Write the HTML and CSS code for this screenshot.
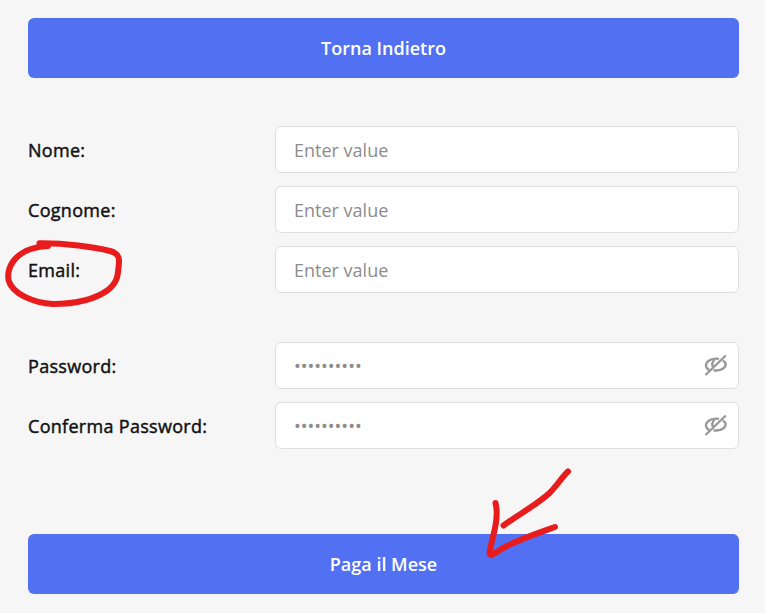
FILE: index.html
```html
<!DOCTYPE html>
<html lang="it">
<head>
	<meta charset="utf-8">
	<title>Paga il Mese</title>
	<link rel="stylesheet" href="styles.css">
</head>
<body>
	<div class="container">
		<button type="button" class="btn">Torna Indietro</button>
		<form class="form" id="payment-form">
			<div class="form-group">
				<div class="form-row">
					<label for="nome">Nome:</label>
					<input type="text" id="nome" name="nome" placeholder="Enter value">
				</div>
				<div class="form-row">
					<label for="cognome">Cognome:</label>
					<input type="text" id="cognome" name="cognome" placeholder="Enter value">
				</div>
				<div class="form-row">
					<label for="email">Email:</label>
					<input type="text" id="email" name="email" placeholder="Enter value">
				</div>
			</div>
			<div class="form-group">
				<div class="form-row">
					<label for="password">Password:</label>
					<div class="password-field">
						<input type="password" id="password" name="password" placeholder="••••••••••">
						<svg class="eye" viewBox="0 0 24 24">
							<path d="M5 16C1.200 13.500 .8 10 4 7.300C7 4.900 11 4.300 15 4.900M8.800 12.500C7.700 10 8.700 7.300 11 5M18.800 6.500C22.500 8.500 22.500 12 19.500 14.300C17 16.300 13 16.800 9.500 16.200M1.500 21L21.800 1.500"/>
						</svg>
					</div>
				</div>
				<div class="form-row">
					<label for="confirm-password">Conferma Password:</label>
					<div class="password-field">
						<input type="password" id="confirm-password" name="confirm-password" placeholder="••••••••••">
						<svg class="eye" viewBox="0 0 24 24">
							<path d="M5 16C1.200 13.500 .8 10 4 7.300C7 4.900 11 4.300 15 4.900M8.800 12.500C7.700 10 8.700 7.300 11 5M18.800 6.500C22.500 8.500 22.500 12 19.500 14.300C17 16.300 13 16.800 9.500 16.200M1.500 21L21.800 1.500"/>
						</svg>
					</div>
				</div>
			</div>
			<button type="submit" class="btn btn-submit">Paga il Mese</button>
		</form>
	</div>

	<!-- hand-drawn marks over the email label and the pay button -->
	<svg class="marks" width="765" height="613" viewBox="0 0 765 613">
		<path d="M39.500 243.300C65 243 94 247 110 251C117 253 119.500 256 119 262C118 275 118 282 108 290C94 300 77 304 53 304C34 303 12 294 8.500 280C6.500 266 16 254 31 249Q40 246 48 246"/>
		<path d="M568 471.500C562 477 556 487 549 493.500C535 506 519 514 503.500 525.500"/>
		<path d="M495.500 503C499 517 494 532 491 545C490 551 488.500 554 491 555C493 555 499 550 505 547C520 539 538 533 555 527"/>
	</svg>
</body>
</html>
```
FILE: styles.css
```css
* {
	box-sizing: border-box;
}

body {
	margin: 0;
	background-color: #f6f6f6;
	color: #111;
	font-family: "Open Sans", sans-serif;
	font-size: 18px;
}

.container {
	padding: 18px 26px 0 28px;
}

.btn {
	display: block;
	width: 100%;
	height: 60px;
	padding: 0;
	background-color: #5271f2;
	color: #fff;
	border: none;
	border-radius: 6px;
	font-family: inherit;
	font-size: 18px;
	font-weight: 600;
	cursor: pointer;
}

.form {
	padding-top: 48px;
}

.form-group {
	display: flex;
	flex-direction: column;
	gap: 13px;
	margin-bottom: 49px;
}

.form-row {
	display: grid;
	grid-template-columns: 247px 1fr;
	align-items: center;
}

.form-row label {
	letter-spacing: 0.3px;
	-webkit-text-stroke: 0.45px #111;
}

.form-row input {
	display: block;
	width: 100%;
	height: 47px;
	padding: 0 18px;
	background-color: #fff;
	border: 1px solid #dfdfdf;
	border-radius: 6px;
	font-family: inherit;
	font-size: 18px;
}

.form-row input::placeholder {
	color: #8c8c8c;
}

.password-field {
	position: relative;
}

.password-field input {
	padding-top: 1px;
}

.eye {
	position: absolute;
	top: 12px;
	right: 11px;
	width: 24px;
	height: 24px;
	fill: none;
	stroke: #999;
	stroke-width: 2.4;
}

.btn-submit {
	margin-top: 85px;
}

.marks {
	position: absolute;
	top: 0;
	left: 0;
	fill: none;
	stroke: #e81c1c;
	stroke-width: 6;
	stroke-linecap: round;
	stroke-linejoin: round;
	pointer-events: none;
}
```
